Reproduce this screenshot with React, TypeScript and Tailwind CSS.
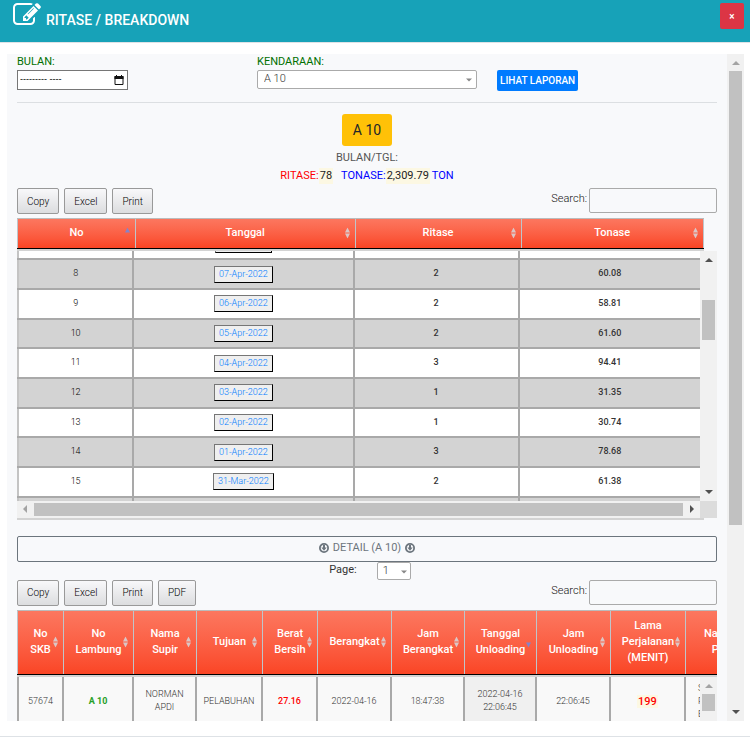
import type { ReactNode } from "react";

type Dir = "up" | "down" | "left" | "right";

const trianglePath: Record<Dir, string> = {
  up: "M0 6L4 2L8 6Z",
  down: "M0 2L4 6L8 2Z",
  left: "M6 0L2 4L6 8Z",
  right: "M2 0L6 4L2 8Z",
};

function Arrow({ dir, className }: { dir: Dir; className: string }) {
  return (
    <svg viewBox="0 0 8 8" className={`size-2 shrink-0 fill-current ${className}`} aria-hidden="true">
      <path d={trianglePath[dir]} />
    </svg>
  );
}

function SortIcon({ state = "none" }: { state?: "none" | "asc" | "desc" }) {
  return (
    <svg
      viewBox="0 0 5 11"
      className="absolute top-1/2 right-[5px] h-[11px] w-[5px] -translate-y-1/2"
      aria-hidden="true"
    >
      {state !== "desc" && (
        <path d="M0 5L2.5 0L5 5Z" fill={state === "asc" ? "#8583c9" : "#dcc6c6"} />
      )}
      {state !== "asc" && (
        <path d="M0 6L2.5 11L5 6Z" fill={state === "desc" ? "#8583c9" : "#dcc6c6"} />
      )}
    </svg>
  );
}

function EditIcon() {
  return (
    <svg viewBox="0 128 1792 1408" className="h-[22px] w-7 fill-white" aria-hidden="true">
      <path d="M888 1184l116-116-152-152-116 116v56h96v96h56zm440-720q-16-16-33 1l-350 350q-17 17-1 33t33-1l350-350q17-17 1-33zm80 594v190q0 119-84.5 203.5t-203.5 84.5h-832q-119 0-203.5-84.5t-84.5-203.5v-832q0-119 84.5-203.5t203.5-84.5h832q63 0 117 25 15 7 18 23 3 17-9 29l-49 49q-14 14-32 8-23-6-45-6h-832q-66 0-113 47t-47 113v832q0 66 47 113t113 47h832q66 0 113-47t47-113v-126q0-13 9-22l64-64q15-15 35-7t20 29zm-96-738l288 288-672 672h-288v-288zm444 132l-92 92-288-288 92-92q28-28 68-28t68 28l152 152q28 28 28 68t-28 68z" />
    </svg>
  );
}

function CalendarIcon() {
  return (
    <svg viewBox="0 0 10 10" className="h-[10px] w-[10px] shrink-0" aria-hidden="true">
      <path d="M1 1.500H9V9.500H1Z" fill="none" stroke="#111" />
      <path d="M0.500 1H9.500V4H0.500ZM2 0H3V1H2ZM7 0H8V1H7Z" fill="#111" />
    </svg>
  );
}

function CircleDown() {
  return (
    <svg viewBox="0 0 20 20" className="size-[10px]" aria-hidden="true">
      <circle cx="10" cy="10" r="8.2" fill="none" stroke="currentColor" strokeWidth="3.6" />
      <path d="M8 4h4v5h3.400L10 15.400 4.600 9H8Z" fill="currentColor" />
    </svg>
  );
}

function ToolButton({ children }: { children: ReactNode }) {
  return (
    <button
      type="button"
      className="h-[26px] rounded-xs border border-[#999] bg-linear-to-b from-[#f8f8fa] to-[#dcdddf] px-[9px] text-[10px] font-light text-black"
    >
      {children}
    </button>
  );
}

function Toolbar({ buttons, id }: { buttons: string[]; id: string }) {
  return (
    <div className="flex items-start justify-between">
      <div className="flex gap-[5px]">
        {buttons.map((b) => (
          <ToolButton key={b}>{b}</ToolButton>
        ))}
      </div>
      <div className="flex items-start gap-[2px]">
        <label htmlFor={id} className="text-[11px] leading-[22px] font-light text-[#111]">
          Search:
        </label>
        <input id={id} type="search" className="h-[25px] w-32 rounded-xs border border-[#aaa] bg-transparent px-1 text-[11px]" />
      </div>
    </div>
  );
}

const headRow = "bg-linear-to-b from-[#fc775f] to-[#fa4423]";
const headCell =
  "relative border-x border-b border-x-[#bfc5ca] border-b-black px-2 text-[11px] leading-4 font-medium whitespace-pre-line text-white";

const trips = [
  ["", "", "", ""],
  ["8", "07-Apr-2022", "2", "60.08"],
  ["9", "06-Apr-2022", "2", "58.81"],
  ["10", "05-Apr-2022", "2", "61.60"],
  ["11", "04-Apr-2022", "3", "94.41"],
  ["12", "03-Apr-2022", "1", "31.35"],
  ["13", "02-Apr-2022", "1", "30.74"],
  ["14", "01-Apr-2022", "3", "78.68"],
  ["15", "31-Mar-2022", "2", "61.38"],
  ["", "", "", ""],
];

function TripTable() {
  return (
    <div>
      <div className="mr-[13px] border-t border-b-2 border-t-[#bbb] border-b-[#d3d3d3]">
        <table className="w-full table-fixed border-collapse">
          <thead>
            <tr className={`h-[29px] ${headRow}`}>
              <th className={`w-[17.2%] ${headCell}`}>
                No
                <SortIcon state="asc" />
              </th>
              <th className={`w-[32%] ${headCell}`}>
                Tanggal
                <SortIcon />
              </th>
              <th className={`w-[24.2%] ${headCell}`}>
                Ritase
                <SortIcon />
              </th>
              <th className={headCell}>
                Tonase
                <SortIcon />
              </th>
            </tr>
          </thead>
        </table>
      </div>
      <div className="flex h-[250px]">
        <div className="min-w-0 flex-1 overflow-hidden">
          <table className="-mt-[22px] h-[299px] w-full table-fixed border-collapse text-center text-[9px]">
            <tbody>
              {trips.map(([no, date, count, ton], i) => (
                <tr key={i} className={i % 2 ? "bg-[#d3d3d3]" : "bg-white"}>
                  <td className="w-[16.9%] border-2 border-[#a9a9a9] border-l-[#c4c4c4] font-light text-black">{no}</td>
                  <td className="w-[32.3%] border-2 border-[#a9a9a9]">
                    <button
                      type="button"
                      className="h-[17px] min-w-[57px] border border-[#767676] border-r-black border-b-black bg-[#efefef] px-1 align-middle leading-[13px] font-light text-[#007bff]"
                    >
                      {date}
                    </button>
                  </td>
                  <td className="w-[24.2%] border-2 border-[#a9a9a9] font-medium text-[#333]">{count}</td>
                  <td className="border-2 border-r-0 border-[#a9a9a9] font-medium text-[#333]">{ton}</td>
                </tr>
              ))}
            </tbody>
          </table>
        </div>
        <div className="flex w-[17px] flex-col items-center bg-[#f1f1f1] py-[5px]">
          <Arrow dir="up" className="text-[#505050]" />
          <div className="mt-9 h-10 w-[13px] bg-[#c1c1c1]" />
          <Arrow dir="down" className="mt-auto text-[#505050]" />
        </div>
      </div>
      <div className="flex h-[17px]">
        <div className="flex flex-1 items-center gap-[5px] bg-[#f1f1f1] px-1">
          <Arrow dir="left" className="text-[#a3a3a3]" />
          <div className="h-[13px] flex-1 bg-[#c1c1c1]" />
          <Arrow dir="right" className="text-[#505050]" />
        </div>
        <div className="w-[17px] bg-[#dcdcdc]" />
      </div>
      <div className="mr-[13px] h-[2px] bg-[#d3d3d3]" />
    </div>
  );
}

const detailHeads: { label: string; width: string; sort?: "desc" }[] = [
  { label: "No\nSKB", width: "w-[46px]" },
  { label: "No\nLambung", width: "w-[70px]" },
  { label: "Nama\nSupir", width: "w-[63px]" },
  { label: "Tujuan", width: "w-[66px]" },
  { label: "Berat\nBersih", width: "w-[55px]" },
  { label: "Berangkat", width: "w-[74px]" },
  { label: "Jam\nBerangkat", width: "w-[73px]" },
  { label: "Tanggal\nUnloading", width: "w-[72px]", sort: "desc" },
  { label: "Jam\nUnloading", width: "w-[74px]" },
  { label: "Lama\nPerjalanan\n(MENIT)", width: "w-[75px]" },
  { label: "Nama\nPT", width: "w-[66px]" },
];

const detailCell = "border-r-2 border-[#a9a9a9] bg-[#f9f9f9] px-1 font-light";

function DetailTable() {
  return (
    <div className="overflow-hidden">
      <div className="w-[734px] border-t border-b-2 border-t-[#bbb] border-b-[#d3d3d3]">
        <table className="w-full table-fixed border-collapse">
          <thead>
            <tr className={`h-16 ${headRow}`}>
              {detailHeads.map((h) => (
                <th key={h.label} className={`${h.width} ${headCell}`}>
                  {h.label}
                  <SortIcon state={h.sort} />
                </th>
              ))}
            </tr>
          </thead>
        </table>
      </div>
      <div className="flex">
        <div className="min-w-0 flex-1 overflow-hidden">
          <table className="h-12 w-[733px] table-fixed border-collapse text-center text-[9px] leading-[13px] text-[#333]">
            <tbody>
              <tr>
                <td className={`w-[45px] border-l-2 ${detailCell}`}>57674</td>
                <td className="w-[70px] border-r-2 border-[#a9a9a9] bg-[#f9f9f9] px-1 font-bold text-[#28a028]">A 10</td>
                <td className={`w-[63px] ${detailCell}`}>NORMAN APDI</td>
                <td className={`w-[66px] ${detailCell}`}>PELABUHAN</td>
                <td className="w-[55px] border-r-2 border-[#a9a9a9] bg-[#f9f9f9] px-1 font-medium text-[#ff0000]">27.16</td>
                <td className={`w-[74px] ${detailCell}`}>2022-04-16</td>
                <td className={`w-[73px] ${detailCell}`}>18:47:38</td>
                <td className="w-[72px] border-r-2 border-[#a9a9a9] bg-[#f0f0f0] px-1 font-light">2022-04-16 22:06:45</td>
                <td className={`w-[74px] ${detailCell}`}>22:06:45</td>
                <td className="w-[75px] border-r-2 border-[#a9a9a9] bg-[#f9f9f9] px-1 text-[11px] font-medium text-[#ff0000]">
                  <mark className="bg-[#fcf8e3] px-px text-inherit">199</mark>
                </td>
                <td className="bg-[#f9f9f9] pl-3 text-left font-light">
                  S
                  <br />
                  P
                  <br />
                  E
                </td>
              </tr>
            </tbody>
          </table>
        </div>
        <div className="flex w-[17px] flex-col items-center bg-[#f1f1f1] py-[5px]">
          <Arrow dir="up" className="text-[#a3a3a3]" />
          <div className="mt-1 h-[17px] w-[13px] bg-[#c1c1c1]" />
        </div>
      </div>
    </div>
  );
}

export default function App() {
  return (
    <div className="flex h-screen flex-col border-b border-[#dee2e6] bg-white font-[Roboto,'Liberation_Sans',sans-serif] text-[#333]">
      <header className="flex h-[43px] shrink-0 items-start justify-between border-b border-[#dee2e6] bg-[#17a2b8] pt-[3px] pr-[6px] pl-[13px]">
        <h1 className="flex items-start gap-[5px] text-[14px] font-medium text-white">
          <EditIcon />
          <span className="mt-[7px] leading-5">RITASE / BREAKDOWN</span>
        </h1>
        <button type="button" aria-label="Close" className="h-[26px] w-6 rounded-xs bg-[#dc3545] text-[10px] font-medium text-white">
          ×
        </button>
      </header>

      <main className="mt-[11px] mr-[6px] mb-[15px] ml-[7px] flex min-h-0 flex-1">
        <div className="min-w-0 flex-1 overflow-hidden bg-[#f8f9fb] px-[10px]">
          <form className="flex items-start border-b border-[#dcdfe2] pb-[11px]">
            <div className="w-60">
              <label htmlFor="bulan" className="block text-[11px] leading-4 text-[#007000]">
                BULAN:
              </label>
              <div className="flex h-5 w-[111px] items-center border border-[#767676] bg-white pr-[3px] pl-[2px]">
                <input
                  id="bulan"
                  type="text"
                  placeholder="--------- ----"
                  className="min-w-0 flex-1 font-['Liberation_Sans',sans-serif] text-[9px] text-black outline-none placeholder:text-black"
                />
                <CalendarIcon />
              </div>
            </div>
            <div className="w-60">
              <label htmlFor="kendaraan" className="block text-[11px] leading-4 text-[#007000]">
                KENDARAAN:
              </label>
              <div className="relative w-[220px]">
                <select
                  id="kendaraan"
                  className="block h-[19px] w-full appearance-none rounded-xs border border-[#aaa] bg-white px-[6px] text-[11px] font-light"
                >
                  <option>A 10</option>
                </select>
                <Arrow dir="down" className="pointer-events-none absolute top-[6px] right-1 scale-75 text-[#888]" />
              </div>
            </div>
            <button type="button" className="mt-4 h-[21px] rounded-xs bg-[#007bff] px-[3px] text-[10px] font-medium text-white">
              LIHAT LAPORAN
            </button>
          </form>

          <section className="mt-[11px] flex flex-col items-center text-[11px] leading-[18px]">
            <span className="rounded-[3px] bg-[#ffc107] px-[11px] py-[7px] text-[14px] text-[#212529]">A 10</span>
            <p className="mt-[3px] text-[#555]">BULAN/TGL:</p>
            <p className="flex items-center text-[#0000ff]">
              <span className="text-[#ff0000]">RITASE:</span>
              <mark className="mr-2 bg-[#fcf8e3] px-px leading-4 text-[#222]">78</mark>
              TONASE:
              <mark className="mr-[2px] bg-[#fcf8e3] px-px leading-4 text-[#222]">2,309.79</mark>
              TON
            </p>
          </section>

          <div className="mt-[3px] mb-1">
            <Toolbar id="search-trip" buttons={["Copy", "Excel", "Print"]} />
          </div>
          <TripTable />

          <button
            type="button"
            className="mt-4 flex h-[26px] w-full items-center justify-center gap-1 rounded-xs border border-[#6c757d] pb-px text-[11px] text-[#6c757d]"
          >
            <CircleDown />
            DETAIL (A 10)
            <CircleDown />
          </button>
          <div className="flex items-start justify-center gap-5 pl-[6px]">
            <label htmlFor="page" className="text-[11px] leading-4">
              Page:
            </label>
            <div className="relative">
              <select id="page" className="block h-[18px] w-[34px] appearance-none rounded-xs border border-[#aaa] bg-white px-[5px] text-[11px] font-light">
                <option>1</option>
              </select>
              <Arrow dir="down" className="pointer-events-none absolute top-[6px] right-[3px] scale-75 text-[#888]" />
            </div>
          </div>
          <div className="mb-1">
            <Toolbar id="search-detail" buttons={["Copy", "Excel", "Print", "PDF"]} />
          </div>
          <DetailTable />
        </div>

        <div className="flex w-[17px] flex-col items-center bg-[#f1f1f1] py-[5px]">
          <Arrow dir="up" className="text-[#a3a3a3]" />
          <div className="mt-1 h-[454px] w-[13px] bg-[#c1c1c1]" />
          <Arrow dir="down" className="mt-auto text-[#505050]" />
        </div>
      </main>
    </div>
  );
}
